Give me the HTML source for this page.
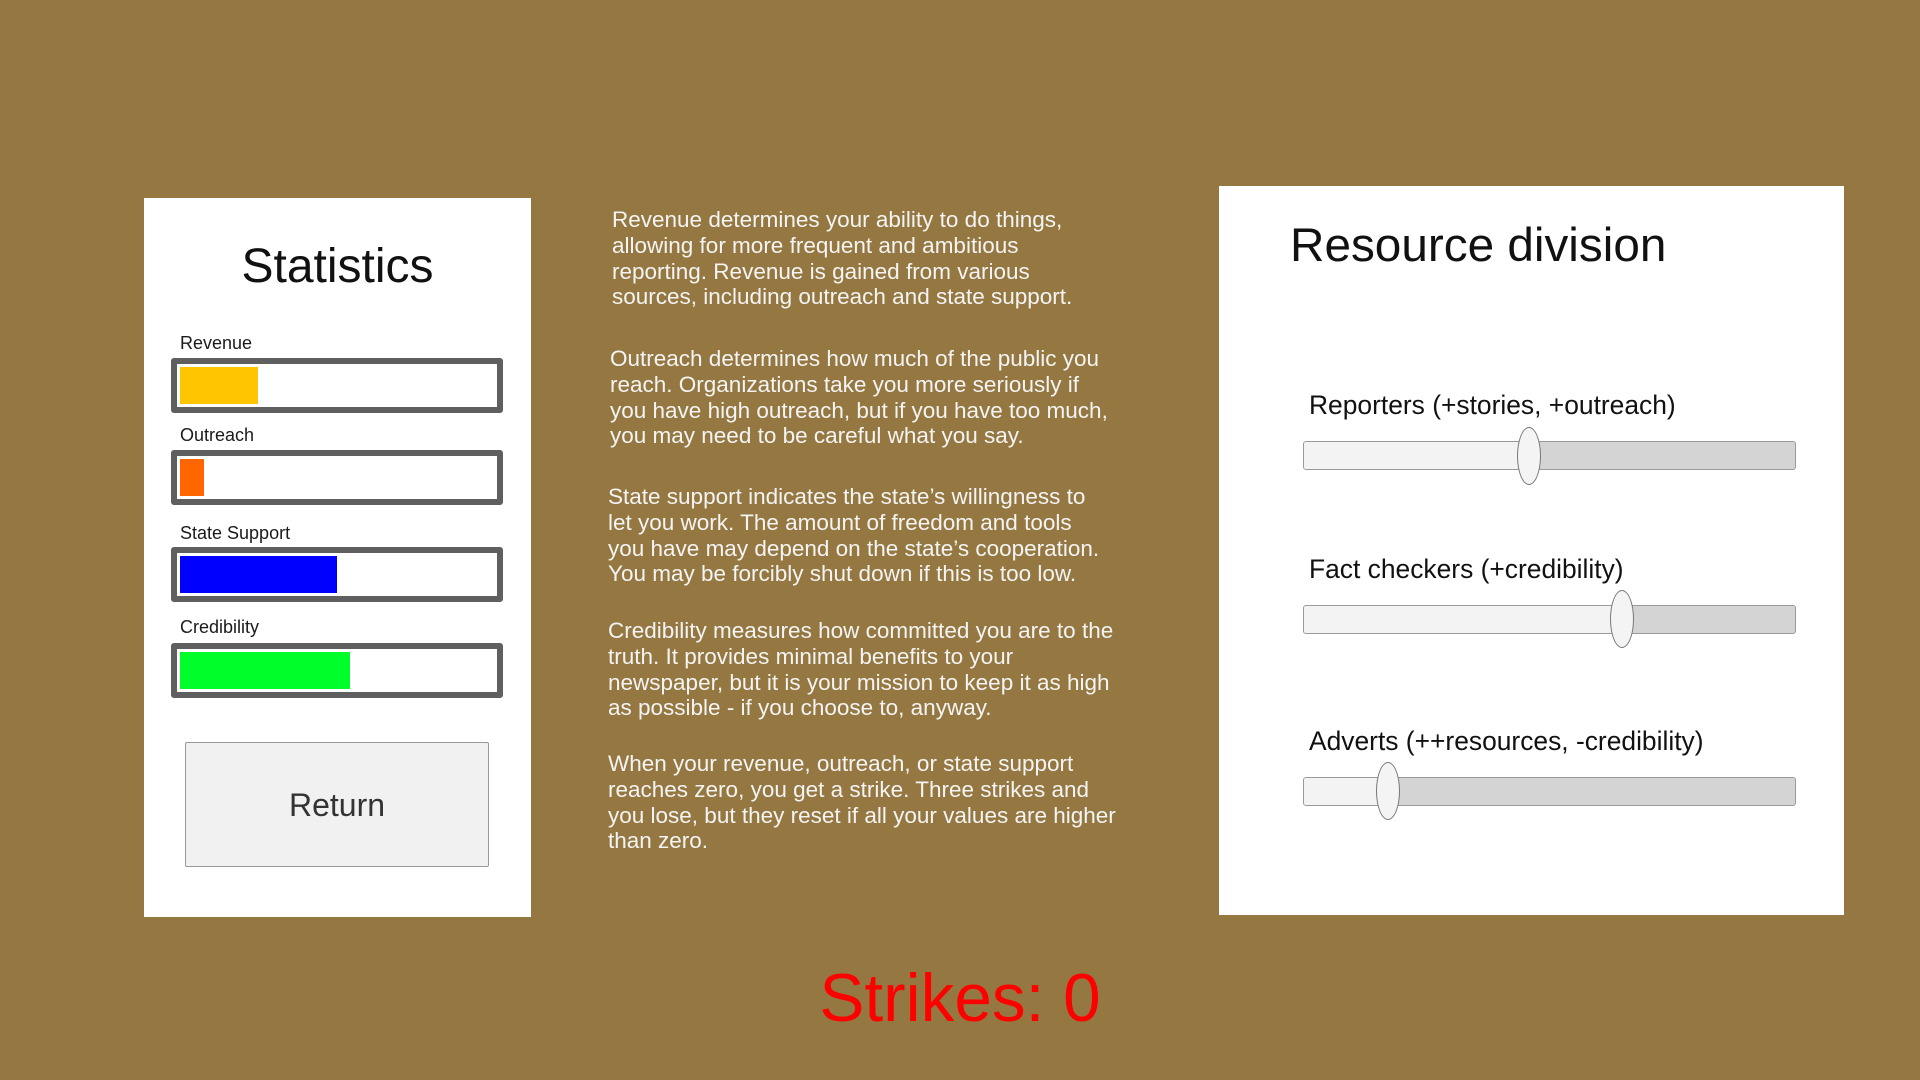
<!DOCTYPE html>
<html><head><meta charset="utf-8"><style>
*{margin:0;padding:0;box-sizing:border-box}
body{width:1920px;height:1080px;background:#957841;font-family:"Liberation Sans",sans-serif;position:relative;overflow:hidden}
.a{position:absolute}
.panel{background:#fff}
.lbl{font-size:18px;color:#1a1a1a;left:180px}
.box{left:171px;width:332px;height:55px;border:6px solid #5f5f5f;border-radius:3px;background:#fff}
.fill{position:absolute;left:3px;top:3px;height:37px}
.p{left:610px;white-space:nowrap;color:#f4f4f4;font-size:22.5px;line-height:25.8px}
.sl{font-size:26.4px;color:#111;left:1309px}
.tr{left:1303px;width:493px;height:29px;border:1px solid #999;border-radius:3px;background:#d4d4d4;overflow:hidden}
.tr i{position:absolute;left:0;top:0;bottom:0;background:#f3f3f3}
.h{width:24px;height:58px;border:1.5px solid #777;border-radius:50%;background:#f4f4f4}
</style></head><body>
<div class="a panel" style="left:144px;top:198px;width:387px;height:719px"></div>
<div class="a" style="left:144px;width:387px;top:239px;text-align:center;font-size:48px;color:#111">Statistics</div>
<div class="a lbl" style="top:333px">Revenue</div>
<div class="a box" style="top:358px"><div class="fill" style="width:78px;background:#ffc600"></div></div>
<div class="a lbl" style="top:425px">Outreach</div>
<div class="a box" style="top:450px"><div class="fill" style="width:24px;background:#ff6600"></div></div>
<div class="a lbl" style="top:523px">State Support</div>
<div class="a box" style="top:547px"><div class="fill" style="width:157px;background:#0000ff"></div></div>
<div class="a lbl" style="top:617px">Credibility</div>
<div class="a box" style="top:643px"><div class="fill" style="width:170px;background:#00ff2a"></div></div>
<div class="a" style="left:185px;top:742px;width:304px;height:125px;background:#f1f1f1;border:1px solid #999;border-radius:2px;font-size:32px;color:#333;text-align:center;line-height:125px">Return</div>

<div class="a p" style="left:612px;top:207px">Revenue determines your ability to do things,<br>allowing for more frequent and ambitious<br>reporting. Revenue is gained from various<br>sources, including outreach and state support.</div>
<div class="a p" style="top:346px">Outreach determines how much of the public you<br>reach. Organizations take you more seriously if<br>you have high outreach, but if you have too much,<br>you may need to be careful what you say.</div>
<div class="a p" style="left:608px;top:484px">State support indicates the state’s willingness to<br>let you work. The amount of freedom and tools<br>you have may depend on the state’s cooperation.<br>You may be forcibly shut down if this is too low.</div>
<div class="a p" style="left:608px;top:618px">Credibility measures how committed you are to the<br>truth. It provides minimal benefits to your<br>newspaper, but it is your mission to keep it as high<br>as possible - if you choose to, anyway.</div>
<div class="a p" style="left:608px;top:751px">When your revenue, outreach, or state support<br>reaches zero, you get a strike. Three strikes and<br>you lose, but they reset if all your values are higher<br>than zero.</div>

<div class="a panel" style="left:1219px;top:186px;width:625px;height:729px"></div>
<div class="a" style="left:1290px;top:218px;font-size:47.7px;color:#111">Resource division</div>
<div class="a sl" style="top:390px">Reporters (+stories, +outreach)</div>
<div class="a tr" style="top:441px"><i style="width:226px"></i></div>
<div class="a h" style="left:1517px;top:427px"></div>
<div class="a sl" style="top:554px">Fact checkers (+credibility)</div>
<div class="a tr" style="top:605px"><i style="width:319px"></i></div>
<div class="a h" style="left:1610px;top:590px"></div>
<div class="a sl" style="top:726px">Adverts (++resources, -credibility)</div>
<div class="a tr" style="top:777px"><i style="width:85px"></i></div>
<div class="a h" style="left:1376px;top:762px"></div>

<div class="a" style="left:0;width:1920px;top:960px;text-align:center;font-size:67.5px;color:#f00">Strikes: 0</div>
</body></html>
